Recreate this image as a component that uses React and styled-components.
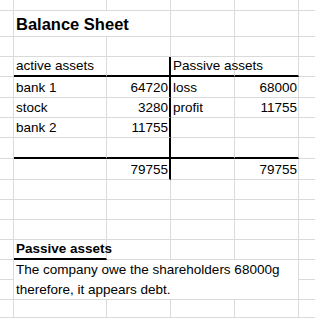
import React from 'react';
import styled, { createGlobalStyle } from 'styled-components';

const GRID = '#dadada';

const Global = createGlobalStyle`
  html, body { margin: 0; padding: 0; background: #ffffff; }
  body { font-family: "Liberation Sans", Arial, sans-serif; color: #000; }
`;

const borderFor = (kind) => {
  if (kind === 'none') return 'none';
  if (kind === 'thick') return '2px solid #000';
  return `1px solid ${GRID}`;
};

const Sheet = styled.div`
  display: grid;
  width: 315px;
  height: 318px;
  overflow: hidden;
  grid-template-columns: 14px 93px 64px 64px 64px 16px;
  grid-template-rows: 11px 26px 20px 20px 21px 20px 20px 21px 21px 20px 20px 20px 20px 20px 20px 18px;
  font-family: "Liberation Sans", Arial, sans-serif;
  font-size: 13.5px;
  color: #000;
`;

const Cell = styled.div`
  box-sizing: border-box;
  min-width: 0;
  display: flex;
  align-items: flex-end;
  justify-content: ${(p) => (p.$align === 'right' ? 'flex-end' : 'flex-start')};
  padding: 0 ${(p) => (p.$align === 'right' ? '1px' : '2px')} 1px 2px;
  grid-column: span ${(p) => p.$span || 1};
  border-right: ${(p) => borderFor(p.$r)};
  border-bottom: ${(p) => borderFor(p.$b)};
  font-weight: ${(p) => (p.$bold ? 700 : 400)};
  line-height: 16px;
  white-space: nowrap;
`;

const TitleCell = styled(Cell)`
  font-size: 16.5px;
  line-height: 20px;
  padding-bottom: 2px;
`;

const NoteCell = styled.div`
  box-sizing: border-box;
  grid-column: span 4;
  grid-row: span 2;
  padding: 0 2px;
  border-right: 1px solid ${GRID};
  border-bottom: 1px solid ${GRID};
  line-height: 20px;
  white-space: nowrap;
`;

const E = (over = {}) => over;
const blank = () => [E(), E(), E(), E(), E(), E({ r: 'none' })];

const rows = [
  blank(),
  'title',
  blank(),
  [E(), E({ text: 'active assets', b: 'thick' }), E({ b: 'thick', r: 'thick' }), E({ text: 'Passive assets', b: 'thick' }), E({ b: 'thick' }), E({ r: 'none' })],
  [E(), E({ text: 'bank 1' }), E({ text: '64720', align: 'right', r: 'thick' }), E({ text: 'loss' }), E({ text: '68000', align: 'right' }), E({ r: 'none' })],
  [E(), E({ text: 'stock' }), E({ text: '3280', align: 'right', r: 'thick' }), E({ text: 'profit' }), E({ text: '11755', align: 'right' }), E({ r: 'none' })],
  [E(), E({ text: 'bank 2' }), E({ text: '11755', align: 'right', r: 'thick' }), E(), E(), E({ r: 'none' })],
  [E(), E({ b: 'thick' }), E({ b: 'thick', r: 'thick' }), E({ b: 'thick' }), E({ b: 'thick' }), E({ r: 'none' })],
  [E(), E(), E({ text: '79755', align: 'right', r: 'thick' }), E(), E({ text: '79755', align: 'right' }), E({ r: 'none' })],
  blank(),
  blank(),
  blank(),
  [E(), E({ text: 'Passive assets', bold: true, b: 'thick' }), E(), E(), E(), E({ r: 'none' })],
  'note',
  [E(), E({ r: 'none' })],
  blank(),
];

export default function App() {
  return (
    <>
      <Global />
      <Sheet>
        {rows.map((row, ri) => {
          if (row === 'title') {
            return (
              <React.Fragment key={ri}>
                <Cell />
                <TitleCell $span={2} $bold>Balance Sheet</TitleCell>
                <Cell />
                <Cell />
                <Cell $r="none" />
              </React.Fragment>
            );
          }
          if (row === 'note') {
            return (
              <React.Fragment key={ri}>
                <Cell />
                <NoteCell>
                  The company owe the shareholders 68000g
                  <br />
                  therefore, it appears debt.
                </NoteCell>
                <Cell $r="none" />
              </React.Fragment>
            );
          }
          return (
            <React.Fragment key={ri}>
              {row.map((c, ci) => (
                <Cell key={ci} $align={c.align} $r={c.r} $b={c.b} $bold={c.bold}>
                  {c.text}
                </Cell>
              ))}
            </React.Fragment>
          );
        })}
      </Sheet>
    </>
  );
}
